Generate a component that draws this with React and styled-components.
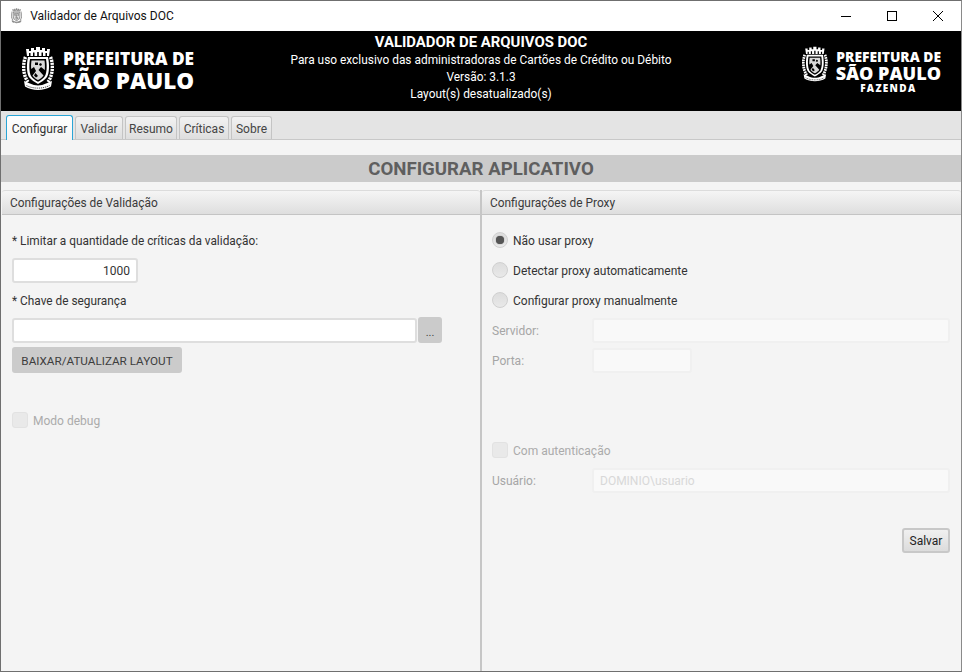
import styled, { createGlobalStyle, css } from "styled-components";

const TABS = [
	{ name: "Configurar", width: 67 },
	{ name: "Validar", width: 48 },
	{ name: "Resumo", width: 52 },
	{ name: "Críticas", width: 50 },
	{ name: "Sobre", width: 41 },
];
const FONT = `Roboto, "Noto Sans", Arial, sans-serif`;

function Crest({ height = 46, color = "#fff", bg = "#000" }) {
	return (
		<CrestSvg viewBox="0 0 32 46" width={height * 32 / 46} height={height}>
			{/* coroa */}
			<path fill={color} d="M5 10 L4 3 L7 3 L7 5 L9 5 L9 2 L12 2 L12 4 L14 4 L14 1 L18 1 L18 4 L20 4 L20 2 L23 2 L23 5 L25 5 L25 3 L28 3 L27 10 Z" />
			<path fill={bg} d="M7 7h1.500v3H7zM11 6.500h1.500V10H11zM15.200 6h1.600v4h-1.600zM19.500 6.500H21V10h-1.500zM23.500 7H25v3h-1.500z" />
			{/* ramos laterais */}
			<path fill="none" stroke={color} strokeWidth="3.400" strokeDasharray="2.200 0.800" d="M3.500 11 C0.500 18 1 29 6 36" />
			<path fill="none" stroke={color} strokeWidth="3.400" strokeDasharray="2.200 0.800" d="M28.500 11 C31.500 18 31 29 26 36" />
			{/* escudo */}
			<path fill={color} d="M6 11 H26 C27.500 18 27.500 27 25 31 C23 34 19 36 16 38 C13 36 9 34 7 31 C4.500 27 4.500 18 6 11 Z" />
			<path fill={bg} d="M8 13 H24 C25 19 25 26 23 30 C21.500 32.500 18.500 34.500 16 35.700 C13.500 34.500 10.500 32.500 9 30 C7 26 7 19 8 13 Z" />
			<path fill={color} opacity="0.85" d="M9.500 14.500 H22.500 C23 18 23 21 22.800 24 L19 21 L16.500 24 L21.500 29.500 C20 31.500 18 33 16 34 C14 33 12 31.500 10.500 29.500 L14 25 L12 21 L9.200 23 C9 20 9 18 9.500 14.500 Z" />
			<path fill={bg} d="M13 16.500h3v2.500h-3zM18 17l2 1-1 2-2-1zM13.500 27l2.500 3-2 1.500-2-2z" />
			{/* faixa */}
			<path fill={color} d="M2 35 L8 37.500 C13 40 19 40 24 37.500 L30 35 L29 40.500 C22 45 10 45 3 40.500 Z" />
			<path fill="none" stroke={bg} strokeWidth="0.700" strokeDasharray="1.300 0.800" d="M4.500 39.500 C11 43 21 43 27.500 39.500" />
		</CrestSvg>
	);
}

function Radio({ checked, children }) {
	return (
		<Row>
			<RadioMark $checked={checked} />
			<OptionText>{children}</OptionText>
		</Row>
	);
}

export default function App() {
	return (
		<Window>
			<GlobalStyle />
			<TitleBar>
				<TitleGroup>
					<Crest height={16} color="#8a8a8a" bg="#e0e0e0" />
					<TitleText>Validador de Arquivos DOC</TitleText>
				</TitleGroup>
				<WindowButtons>
					<WindowButton>
						<svg width="12" height="12" viewBox="0 0 12 12"><path d="M1 6.500h10" stroke="#000" fill="none" /></svg>
					</WindowButton>
					<WindowButton>
						<svg width="12" height="12" viewBox="0 0 12 12"><rect x="1.500" y="1.500" width="9" height="9" stroke="#000" fill="none" /></svg>
					</WindowButton>
					<WindowButton>
						<svg width="12" height="12" viewBox="0 0 12 12"><path d="M1 1l10 10M11 1L1 11" stroke="#000" fill="none" /></svg>
					</WindowButton>
				</WindowButtons>
			</TitleBar>

			<Banner>
				<MainLogo>
					<Crest height={46} />
					<LogoText>
						<LogoLine $size={17.300} $height={21}>PREFEITURA DE</LogoLine>
						<LogoLine $size={22.400} $height={23}>SÃO PAULO</LogoLine>
					</LogoText>
				</MainLogo>
				<BannerCenter>
					<BannerTitle>VALIDADOR DE ARQUIVOS DOC</BannerTitle>
					<BannerLine>Para uso exclusivo das administradoras de Cartões de Crédito ou Débito</BannerLine>
					<BannerLine>Versão: 3.1.3</BannerLine>
					<BannerLine>Layout(s) desatualizado(s)</BannerLine>
				</BannerCenter>
				<SideLogo>
					<Crest height={37} />
					<LogoText>
						<LogoLine $size={13.800} $height={17}>PREFEITURA DE</LogoLine>
						<LogoLine $size={18} $height={17}>SÃO PAULO</LogoLine>
						<LogoSub>FAZENDA</LogoSub>
					</LogoText>
				</SideLogo>
			</Banner>

			<TabStrip>
				{TABS.map((tab, i) => <Tab key={tab.name} $width={tab.width} $active={i === 0}>{tab.name}</Tab>)}
			</TabStrip>

			<Content>
				<PageHeading>CONFIGURAR APLICATIVO</PageHeading>
				<Panels>
					<Panel>
						<PanelHeader $inset={1}>Configurações de Validação</PanelHeader>
						<PanelBody $left={11}>
							<Row><Label>* Limitar a quantidade de críticas da validação:</Label></Row>
							<Row><Field $width={126} $align="right">1000</Field></Row>
							<Row><Label>* Chave de segurança</Label></Row>
							<Row>
								<Field $width={405} />
								<SquareButton>...</SquareButton>
							</Row>
							<Row><GrayButton>BAIXAR/ATUALIZAR LAYOUT</GrayButton></Row>
							<Row />
							<Row>
								<CheckMark />
								<DisabledText>Modo debug</DisabledText>
							</Row>
						</PanelBody>
					</Panel>
					<Divider />
					<Panel>
						<PanelHeader $inset={0}>Configurações de Proxy</PanelHeader>
						<PanelBody $left={10}>
							<Radio checked>Não usar proxy</Radio>
							<Radio>Detectar proxy automaticamente</Radio>
							<Radio>Configurar proxy manualmente</Radio>
							<Row>
								<RowLabel>Servidor:</RowLabel>
								<Field $width={358} $disabled />
							</Row>
							<Row>
								<RowLabel>Porta:</RowLabel>
								<Field $width={100} $disabled />
							</Row>
							<Row />
							<Row />
							<Row>
								<CheckMark />
								<DisabledText>Com autenticação</DisabledText>
							</Row>
							<Row>
								<RowLabel>Usuário:</RowLabel>
								<Field $width={358} $disabled $placeholder>DOMINIO\usuario</Field>
							</Row>
							<Row />
							<ActionRow><SaveButton>Salvar</SaveButton></ActionRow>
						</PanelBody>
					</Panel>
				</Panels>
			</Content>
		</Window>
	);
}

// Style
const GlobalStyle = createGlobalStyle`
	html, body {
		margin: 0;
		padding: 0;
		background: #f4f4f4;
	}
	* {
		box-sizing: border-box;
	}
`;

const Window = styled.div`
	width: 962px;
	height: 672px;
	display: flex;
	flex-direction: column;
	border: 1px solid #6f6f6f;
	border-right-color: #8a8a8a;
	font-family: ${FONT};
	font-size: 12px;
	color: #333;
	overflow: hidden;
`;

const TitleBar = styled.div`
	height: 30px;
	display: flex;
	align-items: center;
	justify-content: space-between;
	background: #fff;
	flex: none;
`;

const TitleGroup = styled.div`
	display: flex;
	align-items: center;
	gap: 8px;
	padding-left: 10px;
`;

const TitleText = styled.span`
	font-size: 12px;
	color: #111;
`;

const WindowButtons = styled.div`
	display: flex;
`;

const WindowButton = styled.div`
	width: 46px;
	height: 30px;
	display: grid;
	place-items: center;
`;

const CrestSvg = styled.svg`
	flex: none;
	display: block;
`;

const Banner = styled.div`
	height: 80px;
	flex: none;
	background: #000;
	color: #fff;
	display: grid;
	grid-template-columns: 1fr auto 1fr;
	align-items: start;
`;

const MainLogo = styled.div`
	display: flex;
	align-items: flex-start;
	gap: 9px;
	padding: 15px 0 0 21px;
`;

const SideLogo = styled.div`
	display: flex;
	align-items: flex-start;
	justify-content: flex-end;
	gap: 8px;
	padding: 15px 20px 0 0;
`;

const LogoText = styled.div`
	display: flex;
	flex-direction: column;
	align-items: flex-end;
	margin-top: 2px;
	font-family: "Open Sans", ${FONT};
	font-weight: 800;
`;

const LogoLine = styled.div`
	font-size: ${props => props.$size}px;
	line-height: ${props => props.$height}px;
	white-space: nowrap;
`;

const LogoSub = styled.div`
	font-size: 10px;
	line-height: 12px;
	letter-spacing: 1.300px;
	align-self: center;
`;

const BannerCenter = styled.div`
	display: flex;
	flex-direction: column;
	align-items: center;
	padding-top: 1px;
`;

const BannerTitle = styled.div`
	font-size: 14.900px;
	font-weight: 700;
	line-height: 20px;
`;

const BannerLine = styled.div`
	font-size: 11.900px;
	line-height: 17px;
	white-space: nowrap;
`;

const TabStrip = styled.div`
	height: 29px;
	flex: none;
	display: flex;
	align-items: flex-end;
	gap: 2px;
	padding-left: 5px;
	background: #e4e4e4;
	border-bottom: 1px solid #c8c8c8;
`;

const activeTab = css`
	background: linear-gradient(#ffffff, #f4f4f4);
	border-color: #2aa5d6;
	border-bottom: none;
	height: 25px;
	margin-bottom: -1px;
	color: #333;
`;

const Tab = styled.div`
	width: ${props => props.$width}px;
	height: 23px;
	padding-top: 1px;
	display: flex;
	align-items: center;
	justify-content: center;
	border: 1px solid #c4c4c4;
	border-bottom: none;
	border-radius: 3px 3px 0 0;
	background: linear-gradient(#f2f2f2, #dedede);
	font-size: 12px;
	color: #444;
	${props => props.$active && activeTab}
`;

const Content = styled.div`
	flex: 1;
	display: flex;
	flex-direction: column;
	background: #f4f4f4;
	padding-top: 15px;
	min-height: 0;
`;

const PageHeading = styled.div`
	height: 27px;
	flex: none;
	display: grid;
	place-items: center;
	background: #cbcbcb;
	font-size: 18.650px;
	font-weight: 700;
	color: #5f5f5f;
`;

const Panels = styled.div`
	flex: 1;
	display: flex;
	margin-top: 8px;
	min-height: 0;
`;

const Panel = styled.section`
	flex: 1;
	display: flex;
	flex-direction: column;
	min-width: 0;
`;

const Divider = styled.div`
	width: 2px;
	flex: none;
	background: #c6c6c6;
`;

const PanelHeader = styled.div`
	height: 25px;
	flex: none;
	display: flex;
	align-items: center;
	padding-left: 8px;
	margin-left: ${props => props.$inset}px;
	border-top: 1px solid #dcdcdc;
	border-bottom: 1px solid #c4c4c4;
	border-radius: 3px 3px 0 0;
	background: linear-gradient(#f5f5f5, #dedede);
	font-size: 11.900px;
	color: #3a3a3a;
`;

const PanelBody = styled.div`
	display: flex;
	flex-direction: column;
	padding: 10px 11px 0 ${props => props.$left}px;
`;

const Row = styled.div`
	height: 30px;
	flex: none;
	display: flex;
	align-items: center;
`;

const ActionRow = styled(Row)`
	justify-content: flex-end;
`;

const Label = styled.span`
	padding-top: 2px;
	font-size: 11.850px;
	color: #333;
`;

const RowLabel = styled.span`
	width: 100px;
	flex: none;
	padding-top: 2px;
	font-size: 12px;
	color: #a6a6a6;
`;

const OptionText = styled.span`
	margin-left: 5px;
	padding-top: 2px;
	font-size: 12px;
	color: #333;
`;

const DisabledText = styled.span`
	margin-left: 5px;
	padding-top: 2px;
	font-size: 12px;
	color: #ababab;
`;

const Field = styled.div`
	width: ${props => props.$width}px;
	height: 25px;
	flex: none;
	display: flex;
	align-items: center;
	justify-content: ${props => props.$align === "right" ? "flex-end" : "flex-start"};
	padding: 1px 6px 0;
	background: ${props => props.$disabled ? "#f9f9f9" : "#fff"};
	border: 2px solid ${props => props.$disabled ? "#f0f0f0" : "#dedede"};
	border-radius: 3px;
	font-size: 12px;
	color: ${props => props.$placeholder ? "#d8d8d8" : "#333"};
`;

const SquareButton = styled.div`
	width: 24px;
	height: 26px;
	margin-left: 1px;
	display: flex;
	align-items: flex-end;
	justify-content: center;
	padding-bottom: 5px;
	background: #cbcbcb;
	border-radius: 3px;
	font-size: 11px;
	line-height: 11px;
	color: #444;
`;

const GrayButton = styled.div`
	width: 170px;
	height: 26px;
	padding-top: 2px;
	display: grid;
	place-items: center;
	background: #cbcbcb;
	border-radius: 3px;
	font-size: 11.700px;
	color: #3d3d3d;
	white-space: nowrap;
`;

const SaveButton = styled.div`
	width: 48px;
	height: 25px;
	padding-top: 1px;
	display: grid;
	place-items: center;
	background: linear-gradient(#f0f0f0, #dcdcdc);
	border: 2px solid #c8c8c8;
	border-radius: 3px;
	font-size: 12px;
	color: #222;
`;

const CheckMark = styled.div`
	width: 16px;
	height: 16px;
	flex: none;
	background: #e9e9e9;
	border: 1px solid #e2e2e2;
	border-radius: 3px;
`;

const RadioMark = styled.div`
	width: 16px;
	height: 16px;
	flex: none;
	position: relative;
	border-radius: 50%;
	background: linear-gradient(#dddddd, #e9e9e9);
	border: 1px solid #d0d0d0;

	&::after {
		content: "";
		display: ${props => props.$checked ? "block" : "none"};
		position: absolute;
		inset: 3px;
		border-radius: 50%;
		background: #555;
		box-shadow: 0 0 1px #555;
	}
`;
